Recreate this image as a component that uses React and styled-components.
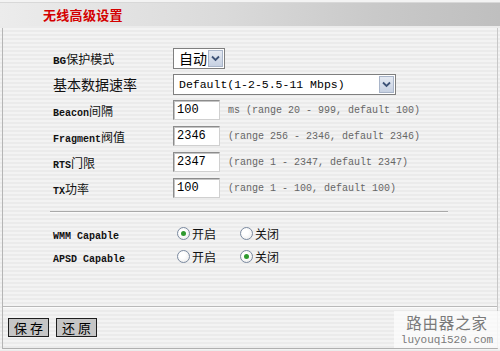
import React from 'react';
import styled, { createGlobalStyle } from 'styled-components';

const GlobalStyle = createGlobalStyle`
  html, body { margin: 0; padding: 0; background: #f0f0f0; }
  body { font-family: "Liberation Mono", "Noto Sans CJK SC", monospace; }
`;

const Page = styled.div`
  position: relative;
  width: 500px;
  height: 351px;
  display: flex;
  flex-direction: column;
  background: repeating-linear-gradient(to bottom, #f3f3f3 0 2px, #ebebeb 2px 4px);
  overflow: hidden;
`;

const Header = styled.div`
  margin-top: 2px;
  height: 23px;
  border-top: 1px solid #d8d8d8;
  display: flex;
  align-items: center;
  padding-left: 43px;
  background: linear-gradient(to right, #ececec 0%, #dadada 45%, #c9c9c9 75%, #bfbfbf 100%);
`;

const Title = styled.h1`
  margin: 0;
  font-family: "Noto Sans CJK SC", sans-serif;
  font-size: 13px;
  font-weight: bold;
  color: #d40000;
  letter-spacing: 0.3px;
`;

const Frame = styled.div`
  flex: 1;
  margin: 2px;
  border-left: 1px solid #b5b5b5;
  border-right: 1px solid #c8c8c8;
  border-bottom: 1px solid #b0b0b0;
  display: flex;
  flex-direction: column;
`;

const Form = styled.div`
  padding: 17px 0 0 50px;
  display: grid;
  grid-template-columns: 120px 1fr;
  grid-auto-rows: 26px;
  align-items: center;
`;

const Label = styled.div`
  font-family: "Noto Sans CJK SC", sans-serif;
  font-size: ${p => (p.$big ? '14px' : '12px')};
  color: #111;
  white-space: nowrap;
`;

const Latin = styled.span`
  font-family: "Liberation Mono", monospace;
  font-size: ${p => (p.$size || 10)}px;
  font-weight: bold;
`;

const Control = styled.div`
  display: flex;
  align-items: center;
`;

const SelectBox = styled.div`
  width: ${p => p.$width}px;
  height: 21px;
  box-sizing: border-box;
  border: 1px solid #7f7f7f;
  background: #fff;
  display: flex;
  align-items: center;
  justify-content: space-between;
  padding: 1px 1px 1px 5px;
`;

const SelectText = styled.span`
  font-family: ${p => (p.$cjk ? '"Noto Sans CJK SC", sans-serif' : '"Liberation Mono", monospace')};
  font-size: ${p => (p.$cjk ? '14px' : '11.5px')};
  color: #000;
  white-space: nowrap;
`;

const DropBtn = styled.span`
  width: 15px;
  height: 17px;
  box-sizing: border-box;
  border: 1px solid #a9b5c9;
  background: linear-gradient(to bottom, #e4e9f2, #c7d1e2);
  display: flex;
  align-items: center;
  justify-content: center;
`;

const Input = styled.input`
  width: 47px;
  height: 20px;
  box-sizing: border-box;
  margin: 0;
  padding: 0 3px;
  border: 1px solid #8c8c8c;
  border-right-color: #d0d0d0;
  border-bottom-color: #d0d0d0;
  box-shadow: inset 1px 1px 0 #c4c4c4;
  background: #fff;
  font-family: "Liberation Mono", monospace;
  font-size: 12px;
  color: #000;
  outline: none;
`;

const Hint = styled.span`
  margin-left: 8px;
  font-family: "Liberation Mono", monospace;
  font-size: 10px;
  color: #666;
  white-space: nowrap;
`;

const Divider = styled.div`
  margin: 10px 0 0 47px;
  width: 398px;
  height: 1px;
  background: #a9a9a9;
  border-bottom: 1px solid #fafafa;
`;

const RadioForm = styled(Form)`
  padding-top: 9px;
  grid-auto-rows: 23px;
`;

const Options = styled.div`
  display: flex;
  align-items: center;
  padding-left: 4px;
`;

const Option = styled.label`
  width: 63px;
  display: flex;
  align-items: center;
  gap: 2px;
  font-family: "Noto Sans CJK SC", sans-serif;
  font-size: 12px;
  color: #111;
`;

const Radio = styled.span`
  width: 13px;
  height: 13px;
  box-sizing: border-box;
  border-radius: 50%;
  border: 1px solid #7b8aa0;
  background: radial-gradient(circle at 40% 40%, #ffffff 30%, #e6e6e6 100%);
  display: flex;
  align-items: center;
  justify-content: center;
  &::after {
    content: '';
    width: 5px;
    height: 5px;
    border-radius: 50%;
    background: ${p => (p.$on ? '#2f9a2f' : 'transparent')};
  }
`;

const Spacer = styled.div`
  flex: 1;
`;

const Footer = styled.div`
  border-top: 1px solid #b9b9b9;
  box-shadow: inset 0 1px 0 #fbfbfb;
  height: 41px;
  display: flex;
  align-items: center;
  gap: 7px;
  padding: 0 0 0 5px;
`;

const Button = styled.button`
  width: 41px;
  height: 19px;
  margin: 0;
  padding: 0;
  border: 1px solid #1e1e1e;
  background: #c5c5c5;
  font-family: "Noto Sans CJK SC", sans-serif;
  font-size: 13px;
  line-height: 16px;
  color: #000;
  letter-spacing: 3px;
  text-indent: 3px;
`;

const Watermark = styled.div`
  position: absolute;
  right: 0;
  bottom: 3px;
  width: 106px;
  height: 37px;
  background: rgba(250, 250, 250, 0.85);
  display: flex;
  flex-direction: column;
  align-items: center;
  justify-content: flex-start;
  color: #7a7a7a;
`;

const WmTitle = styled.div`
  font-family: "Noto Sans CJK SC", sans-serif;
  font-size: 15.5px;
  line-height: 23px;
  letter-spacing: 0.8px;
`;

const WmUrl = styled.div`
  font-family: "Liberation Mono", monospace;
  font-size: 11px;
  line-height: 13px;
`;

const Chevron = () => (
  <svg width="9" height="7" viewBox="0 0 9 7">
    <path d="M1 1.5 L4.5 5 L8 1.5" fill="none" stroke="#3d5277" strokeWidth="1.8" />
  </svg>
);

const Select = ({ width, text, cjk }) => (
  <SelectBox $width={width}>
    <SelectText $cjk={cjk}>{text}</SelectText>
    <DropBtn><Chevron /></DropBtn>
  </SelectBox>
);

const numRows = [
  { latin: 'Beacon', cn: '间隔', val: '100', hint: 'ms (range 20 - 999, default 100)' },
  { latin: 'Fragment', cn: '阀值', val: '2346', hint: '(range 256 - 2346, default 2346)' },
  { latin: 'RTS', cn: '门限', val: '2347', hint: '(range 1 - 2347, default 2347)' },
  { latin: 'TX', cn: '功率', val: '100', hint: '(range 1 - 100, default 100)' },
];

const radioRows = [
  { name: 'WMM Capable', on: true },
  { name: 'APSD Capable', on: false },
];

export default function App() {
  return (
    <Page>
      <GlobalStyle />
      <Header>
        <Title>无线高级设置</Title>
      </Header>
      <Frame>
        <Form>
          <Label><Latin $size={11}>BG</Latin>保护模式</Label>
          <Control><Select width={52} text="自动" cjk /></Control>

          <Label $big>基本数据速率</Label>
          <Control><Select width={223} text="Default(1-2-5.5-11 Mbps)" /></Control>

          {numRows.map(r => (
            <React.Fragment key={r.latin}>
              <Label><Latin>{r.latin}</Latin>{r.cn}</Label>
              <Control>
                <Input readOnly value={r.val} />
                <Hint>{r.hint}</Hint>
              </Control>
            </React.Fragment>
          ))}
        </Form>
        <Divider />
        <RadioForm>
          {radioRows.map(r => (
            <React.Fragment key={r.name}>
              <Label><Latin>{r.name}</Latin></Label>
              <Options>
                <Option><Radio $on={r.on} />开启</Option>
                <Option><Radio $on={!r.on} />关闭</Option>
              </Options>
            </React.Fragment>
          ))}
        </RadioForm>
        <Spacer />
        <Footer>
          <Button>保存</Button>
          <Button>还原</Button>
        </Footer>
      </Frame>
      <Watermark>
        <WmTitle>路由器之家</WmTitle>
        <WmUrl>luyouqi520.com</WmUrl>
      </Watermark>
    </Page>
  );
}
